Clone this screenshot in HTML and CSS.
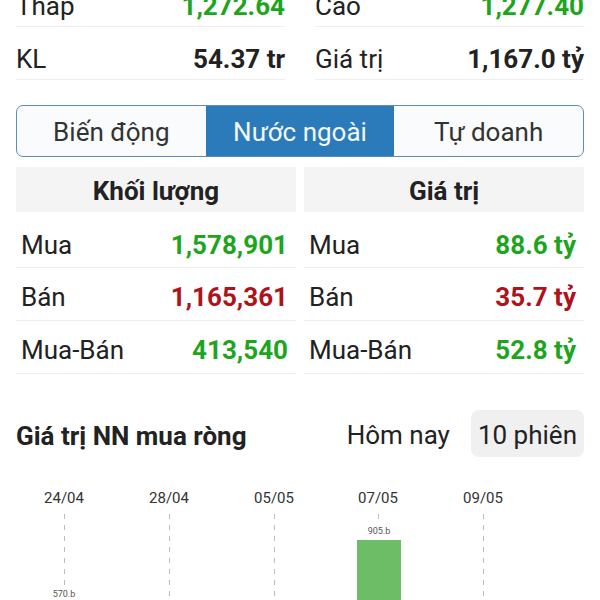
FILE: index.html
```html
<!DOCTYPE html>
<html lang="vi">
<head>
<meta charset="UTF-8" />
<meta name="viewport" content="width=device-width, initial-scale=1" />
<title>Nước ngoài</title>
<link rel="stylesheet" href="styles.css">
</head>
<body>
  <div class="page">
    <!-- Tóm tắt phiên -->
    <div class="summary">
      <div class="sum-row"><span>Thấp</span><b class="up">1,272.64</b></div>
      <div class="sum-row"><span>Cao</span><b class="up">1,277.40</b></div>
      <div class="sum-row"><span>KL</span><b>54.37 tr</b></div>
      <div class="sum-row"><span>Giá trị</span><b>1,167.0 tỷ</b></div>
    </div>

    <div class="tabs">
      <div class="tab">Biến động</div>
      <div class="tab active">Nước ngoài</div>
      <div class="tab">Tự doanh</div>
    </div>

    <div class="stats">
      <div class="stat-col">
        <div class="stat-head">Khối lượng</div>
        <div class="stat-row"><span>Mua</span><b class="up">1,578,901</b></div>
        <div class="stat-row"><span>Bán</span><b class="down">1,165,361</b></div>
        <div class="stat-row"><span>Mua-Bán</span><b class="up">413,540</b></div>
      </div>
      <div class="stat-col">
        <div class="stat-head">Giá trị</div>
        <div class="stat-row"><span>Mua</span><b class="up">88.6 tỷ</b></div>
        <div class="stat-row"><span>Bán</span><b class="down">35.7 tỷ</b></div>
        <div class="stat-row"><span>Mua-Bán</span><b class="up">52.8 tỷ</b></div>
      </div>
    </div>

    <div class="chart-head">
      <h3>Giá trị NN mua ròng</h3>
      <div class="range">
        <div class="range-btn">Hôm nay</div>
        <div class="range-btn selected">10 phiên</div>
      </div>
    </div>
  </div>

  <svg class="chart" width="600" height="144" viewBox="0 0 600 144">
    <g class="dates">
      <text x="64" y="46">24/04</text>
      <text x="169" y="46">28/04</text>
      <text x="274" y="46">05/05</text>
      <text x="378" y="46">07/05</text>
      <text x="483" y="46">09/05</text>
    </g>
    <g class="grid">
      <line x1="64.5" y1="57" x2="64.5" y2="129" />
      <line x1="169.5" y1="57" x2="169.5" y2="144" />
      <line x1="274.5" y1="57" x2="274.5" y2="144" />
      <line x1="378.5" y1="57" x2="378.5" y2="67" />
      <line x1="483.5" y1="57" x2="483.5" y2="144" />
    </g>
    <rect class="bar" x="357" y="83" width="44" height="61" />
    <g class="bar-val">
      <text x="379" y="77">905.b</text>
      <text x="64" y="140">570.b</text>
    </g>
  </svg>
</body>
</html>
```

FILE: styles.css
```css
body {
  margin: 0;
  background-color: #fff;
  color: #222;
  font-family: Roboto, "Noto Sans", sans-serif;
  font-size: 26px;
  line-height: 28px;
  overflow: hidden;
}

.page {
  padding: 0 16px;
}

.up {
  color: #1ea51e;
}
.down {
  color: #b0121a;
}

/* Tóm tắt */
.summary {
  display: grid;
  grid-template-columns: 1fr 1fr;
  column-gap: 30px;
  margin-top: -26px;
}
.sum-row {
  display: flex;
  justify-content: space-between;
  padding: 18px 0 6px;
  border-bottom: 1px solid #eee;
}
.sum-row b {
  font-weight: 700;
}

/* Tabs */
.tabs {
  display: flex;
  height: 52px;
  margin-top: 25px;
  box-sizing: border-box;
  border: 1px solid #5b8cbb;
  border-radius: 7px;
  overflow: hidden;
  background-color: #fafbfc;
}
.tab {
  flex: 1;
  display: flex;
  align-items: center;
  justify-content: center;
  padding-top: 2px;
  color: #333;
}
.tab.active {
  background-color: #2b7bbb;
  color: #f2f7fc;
}

/* Bảng khối lượng / giá trị */
.stats {
  display: grid;
  grid-template-columns: 1fr 1fr;
  column-gap: 8px;
  margin-top: 10px;
}
.stat-head {
  height: 45px;
  display: flex;
  align-items: center;
  justify-content: center;
  padding-top: 2px;
  box-sizing: border-box;
  background-color: #f4f4f4;
  font-weight: 700;
}
.stat-row {
  display: flex;
  justify-content: space-between;
  padding: 15px 8px 9px 5px;
  border-bottom: 1px solid #eee;
}
.stat-head + .stat-row {
  padding-top: 19px;
  padding-bottom: 8px;
}
.stat-row b {
  font-weight: 700;
}

/* Biểu đồ */
.chart-head {
  display: flex;
  align-items: center;
  height: 47px;
  margin-top: 36px;
}
.chart-head h3 {
  flex: 1;
  margin: 0;
  padding-top: 5px;
  font-size: 26px;
  font-weight: 700;
  color: #222;
}
.range {
  display: flex;
  gap: 14px;
}
.range-btn {
  padding: 11px 7px 8px;
  border-radius: 8px;
  color: #222;
}
.range-btn.selected {
  background-color: #f0f0f0;
}

.chart {
  display: block;
}
.dates text {
  font-family: Roboto, sans-serif;
  font-size: 15px;
  fill: #333;
  text-anchor: middle;
}
.grid line {
  stroke: #bdbdbd;
  stroke-width: 1;
  stroke-dasharray: 5 6;
}
.bar {
  fill: #6cbd66;
}
.bar-val text {
  font-family: Roboto, sans-serif;
  font-size: 9px;
  fill: #555;
  text-anchor: middle;
}
```
